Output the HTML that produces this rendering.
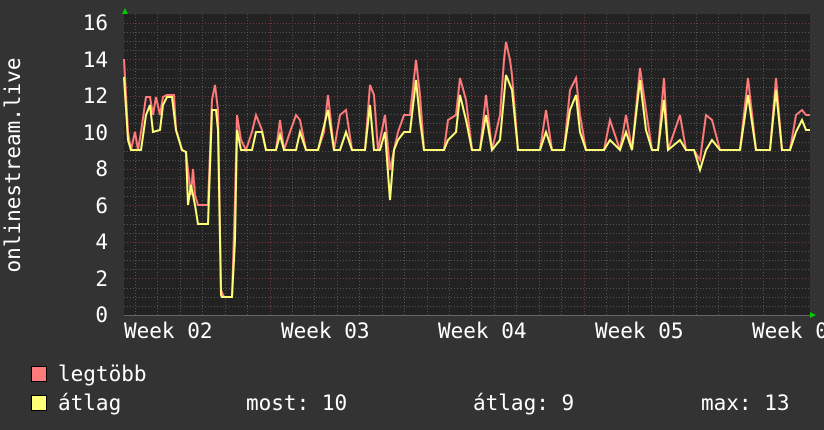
<!DOCTYPE html>
<html><head><meta charset="utf-8"><style>
html,body{margin:0;padding:0;background:#333;}
svg{display:block}
text{font-family:"DejaVu Sans Mono","Liberation Mono",monospace;fill:#fff;}
</style></head><body>
<svg width="824" height="430" viewBox="0 0 824 430" xmlns="http://www.w3.org/2000/svg">
<rect width="824" height="430" fill="#333"/>
<rect x="124" y="14" width="686" height="302" fill="#222"/>
<g stroke="#555" stroke-width="1" stroke-dasharray="1,2">
<path d="M124 306.5H810M124 297.5H810M124 288.5H810M124 269.5H810M124 260.5H810M124 251.5H810M124 233.5H810M124 224.5H810M124 215.5H810M124 196.5H810M124 187.5H810M124 178.5H810M124 160.5H810M124 151.5H810M124 142.5H810M124 123.5H810M124 114.5H810M124 105.5H810M124 87.5H810M124 78.5H810M124 69.5H810M124 50.5H810M124 41.5H810M124 32.5H810"/>
<path d="M135.5 14V316M157.5 14V316M180.5 14V316M202.5 14V316M225.5 14V316M247.5 14V316M292.5 14V316M314.5 14V316M337.5 14V316M359.5 14V316M382.5 14V316M404.5 14V316M449.5 14V316M471.5 14V316M494.5 14V316M516.5 14V316M539.5 14V316M561.5 14V316M606.5 14V316M628.5 14V316M651.5 14V316M673.5 14V316M696.5 14V316M718.5 14V316M763.5 14V316M785.5 14V316"/>
</g>
<g stroke="#7a3a3a" stroke-width="1" stroke-dasharray="1,2">
<path d="M124 278.5H810M124 242.5H810M124 205.5H810M124 169.5H810M124 132.5H810M124 96.5H810M124 59.5H810M124 23.5H810"/>
<path d="M270.5 14V316M427.5 14V316M584.5 14V316M741.5 14V316"/>
</g>
<path d="M124 315.5H812" stroke="#666"/>
<polygon points="122,14 128,14 125,8" fill="#0c0"/>
<polygon points="810,312 810,318 816,315" fill="#0c0"/>
<polyline fill="none" stroke="#ff7a7a" stroke-width="2" points="124,59 128,132 131,150 135,132 138,150 141,132 146,97 150,97 153,115 156,97 160,115 163,97 167,95 174,95 176,130 182,150 186,152 188,170 191,195 193,169 195,195 198,205 208,205 212,100 215,85 218,110 221,290 224,297 232,297 235,200 237,115 241,140 246,150 252,132 256,115 262,130 266,150 276,150 280,120 284,150 290,132 296,115 300,120 306,150 318,150 324,132 328,95 334,150 340,115 346,110 352,150 365,150 370,85 374,95 378,150 385,115 390,170 394,150 398,132 404,115 410,115 416,60 420,95 424,150 444,150 448,120 456,115 460,78 466,100 472,150 480,150 486,95 492,150 500,115 504,60 506,42 510,60 512,75 518,150 540,150 546,110 552,150 564,150 570,90 576,78 580,115 586,150 604,150 610,120 620,150 626,115 632,150 640,68 646,110 652,150 658,150 664,78 668,150 680,115 686,150 694,150 700,160 706,115 712,120 720,150 740,150 748,78 756,150 770,150 776,78 782,150 790,150 796,115 802,110 806,115 810,115"/>
<polyline fill="none" stroke="#ffff77" stroke-width="2" points="124,77 128,140 131,150 141,150 146,115 150,105 153,132 160,130 163,105 167,97 172,97 176,130 182,150 186,152 188,205 191,185 195,205 198,224 208,224 212,110 216,110 218,130 221,295 222,297 232,297 235,240 237,130 241,150 252,150 256,132 262,132 266,150 276,150 280,135 284,150 296,150 300,132 306,150 318,150 328,110 334,150 340,150 346,132 352,150 365,150 370,105 374,150 380,150 385,132 390,200 394,150 398,140 404,132 410,132 416,80 420,120 424,150 444,150 448,140 456,132 460,95 466,120 472,150 480,150 486,115 492,150 500,140 506,75 512,90 518,150 540,150 546,132 552,150 564,150 570,110 576,95 580,132 586,150 604,150 610,140 620,150 626,132 632,150 640,80 646,130 652,150 658,150 664,100 668,150 680,140 686,150 694,150 700,170 706,150 712,140 720,150 740,150 748,95 756,150 770,150 776,90 782,150 790,150 796,132 802,120 806,130 810,130"/>
<g font-size="21" text-anchor="end">
<text x="108" y="30">16</text><text x="108" y="67">14</text><text x="108" y="103">12</text><text x="108" y="140">10</text><text x="108" y="176">8</text><text x="108" y="213">6</text><text x="108" y="249">4</text><text x="108" y="286">2</text><text x="108" y="322">0</text>
</g>
<g font-size="21">
<text x="124" y="338">Week 02</text><text x="281" y="338">Week 03</text><text x="438" y="338">Week 04</text><text x="595" y="338">Week 05</text><text x="752" y="338">Week 06</text>
</g>
<text font-size="21" transform="translate(20,165) rotate(-90)" text-anchor="middle">onlinestream.live</text>
<rect x="31.5" y="366.5" width="15" height="15" fill="#ff7a7a" stroke="#000"/>
<rect x="31.5" y="395.5" width="15" height="15" fill="#ffff77" stroke="#000"/>
<g font-size="21">
<text x="58" y="381">legtöbb</text>
<text x="58" y="410">átlag</text>
<text x="246" y="410">most: 10</text>
<text x="473" y="410">átlag: 9</text>
<text x="701" y="410">max: 13</text>
</g>
</svg>
</body></html>
